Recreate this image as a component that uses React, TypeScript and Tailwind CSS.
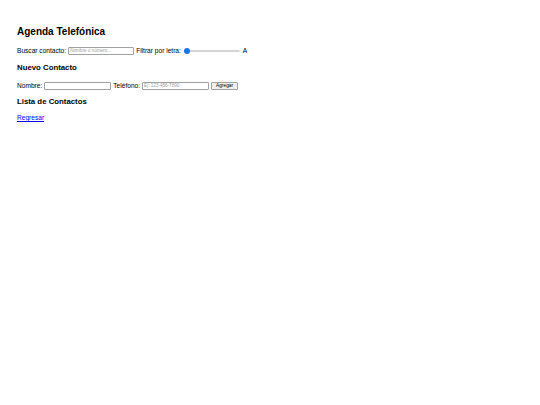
import React from "react";

export default function App() {
  const font = { fontFamily: '"Liberation Sans", Arial, sans-serif' };
  return (
    <div className="w-[540px] h-[405px] bg-white text-black pl-[17px] pt-[26px]" style={font}>
      <h2 className="text-[10px] leading-[12px] font-bold m-0">Agenda Telefónica</h2>
      <div className="mt-[8px] flex items-center h-[9px] text-[6.6px] leading-[8px] whitespace-nowrap">
        <span>Buscar contacto:</span>
        <input
          className="ml-[2px] w-[66px] h-[8px] border border-[#a0a0a0] rounded-[1px] px-[1px] text-[4.6px] placeholder:text-[#a0a0a0] outline-none"
          placeholder="Nombre o número..."
        />
        <span className="ml-[2px]">Filtrar por letra:</span>
        <div className="ml-[3px] relative w-[56px] h-[6px] flex items-center">
          <div className="w-full h-[2px] bg-[#ebebeb] border border-[#d4d4d4] rounded-full" />
          <div className="absolute left-0 w-[6px] h-[6px] rounded-full bg-[#1a73e8]" />
        </div>
        <span className="ml-[3px]">A</span>
      </div>
      <h3 className="mt-[8px] text-[7.8px] leading-[10px] font-bold">Nuevo Contacto</h3>
      <div className="mt-[8px] flex items-center h-[9px] text-[6.6px] leading-[8px] whitespace-nowrap">
        <span>Nombre:</span>
        <input className="ml-[2px] w-[67px] h-[8px] border border-[#a0a0a0] rounded-[1px] outline-none" />
        <span className="ml-[2px]">Teléfono:</span>
        <input
          className="ml-[2px] w-[67px] h-[8px] border border-[#a0a0a0] rounded-[1px] px-[1px] text-[4.6px] placeholder:text-[#a0a0a0] outline-none"
          placeholder="Ej: 123-456-7890"
        />
        <button className="ml-[2px] h-[8px] px-[4px] border border-[#a0a0a0] rounded-[1px] bg-[#efefef] text-[4.8px] leading-[6px]">
          Agregar
        </button>
      </div>
      <h3 className="mt-[7px] text-[7.8px] leading-[10px] font-bold">Lista de Contactos</h3>
      <a href="#" className="block mt-[7px] text-[6.6px] leading-[8px] text-[#0000ee] underline w-fit">
        Regresar
      </a>
    </div>
  );
}
